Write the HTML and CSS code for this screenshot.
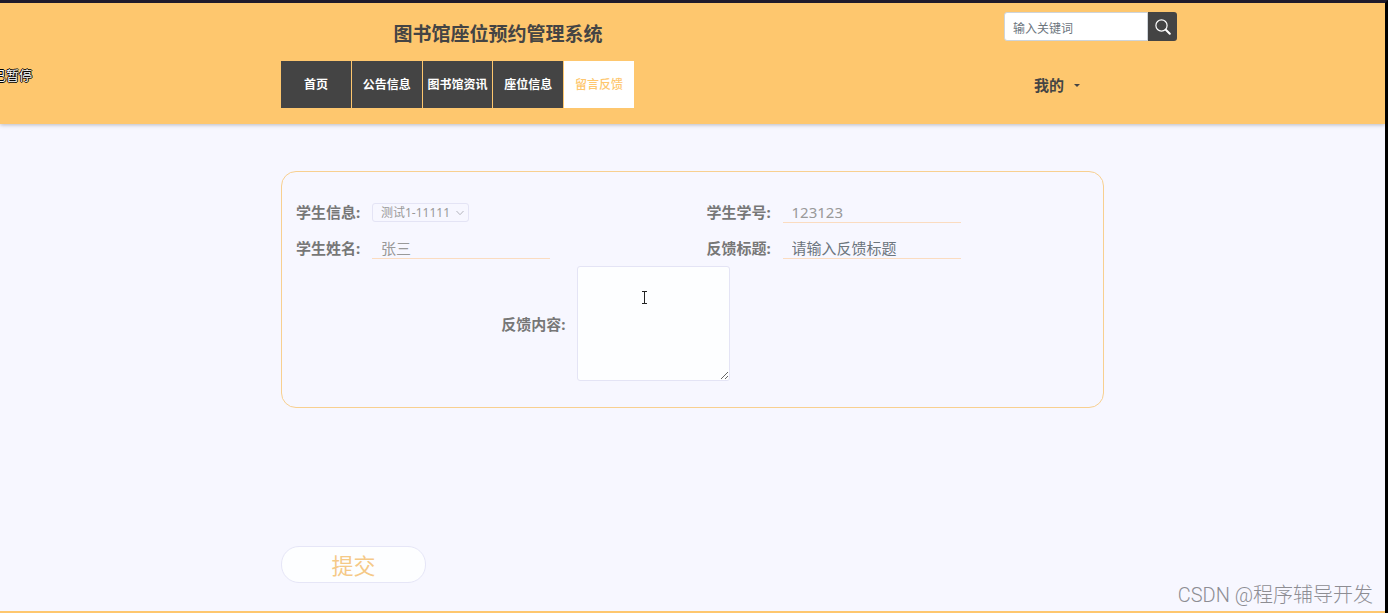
FILE: index.html
```html
<!DOCTYPE html>
<html lang="zh-CN">
<head>
<meta charset="utf-8">
<title>图书馆座位预约管理系统</title>
<link rel="stylesheet" href="styles.css">
</head>
<body>
<div class="page">
  <header class="header">
    <div class="container header-row">
      <div class="brand">
        <h1 class="title">图书馆座位预约管理系统</h1>
        <nav class="nav">
          <a class="nav-link" href="#">首页</a>
          <a class="nav-link" href="#">公告信息</a>
          <a class="nav-link" href="#">图书馆资讯</a>
          <a class="nav-link" href="#">座位信息</a>
          <a class="nav-link active" href="#">留言反馈</a>
        </nav>
      </div>
      <div class="tools">
        <form class="search">
          <input class="search-input" type="text" placeholder="输入关键词" aria-label="输入关键词">
          <button class="search-button" type="button" aria-label="搜索">
            <svg width="16" height="16" viewBox="0 0 16 16" fill="none" stroke="#fff" stroke-linecap="round"><circle cx="6.5" cy="6.5" r="5.6" stroke-width="1.2"/><path d="M10.8 10.8l4 4" stroke-width="2"/></svg>
          </button>
        </form>
        <button class="account" type="button">我的<span class="caret"></span></button>
      </div>
    </div>
  </header>

  <main class="container main">
    <form>
      <div class="card">
        <div class="field">
          <label class="label" for="student">学生信息:</label>
          <span class="select-wrap">
            <select class="select" id="student" disabled><option>测试1-11111</option></select>
            <svg class="chevron" width="8" height="6" viewBox="0 0 8 6" fill="none" stroke="#b4b5bd"><path d="M.5 1L4 4.7 7.500 1"/></svg>
          </span>
        </div>
        <div class="field">
          <label class="label" for="number">学生学号:</label>
          <input class="input" id="number" type="text" value="123123" readonly>
        </div>
        <div class="field">
          <label class="label" for="name">学生姓名:</label>
          <input class="input" id="name" type="text" value="张三" readonly>
        </div>
        <div class="field">
          <label class="label" for="subject">反馈标题:</label>
          <input class="input" id="subject" type="text" placeholder="请输入反馈标题">
        </div>
        <div class="field field-wide">
          <label class="label" for="content">反馈内容:</label>
          <textarea class="textarea" id="content"></textarea>
        </div>
      </div>
      <button class="submit" type="button">提交</button>
    </form>
  </main>
  <footer class="footer"></footer>

  <div class="paused">已暂停</div>
  <svg class="cursor" width="7" height="13" viewBox="0 0 7 13" fill="none" stroke="#222"><path d="M1 .5h5M1 12.500h5M3.500 1v11"/></svg>
  <div class="watermark">CSDN @程序辅导开发</div>
</div>
</body>
</html>
```
FILE: styles.css
```css
* {
  box-sizing: border-box;
}

body {
  margin: 0;
  background: #f7f7ff;
  font-family: "Noto Sans", "Noto Sans CJK SC", sans-serif;
}

button,
input,
select,
textarea {
  font-family: inherit;
}

.page {
  position: relative;
  display: flex;
  flex-direction: column;
  min-height: 100vh;
  overflow: hidden;
  border-top: 3px solid #1e1a2b;
  border-right: 3px solid #000;
}

.container {
  width: 100%;
  max-width: 823px;
  margin: 0 auto;
}

.header {
  padding-bottom: 16px;
  background: #fec76e;
  box-shadow: 0 1px 4px rgba(0, 0, 0, 0.25);
}

.header-row {
  display: flex;
  justify-content: space-between;
}

.brand {
  width: 434px;
}

.title {
  margin: 0;
  padding: 17px 0 13px;
  color: #444;
  font-size: 19px;
  line-height: 28px;
  text-align: center;
}

.nav {
  display: flex;
  gap: 1px;
  width: 353px;
}

.nav-link {
  flex: 1;
  background: #444;
  color: #fff;
  font-size: 12px;
  font-weight: 700;
  line-height: 47px;
  text-align: center;
  text-decoration: none;
  white-space: nowrap;
}

.nav-link.active {
  background: #fff;
  color: #fec76e;
  font-weight: 500;
}

.tools {
  margin-right: -73px;
  padding-top: 9px;
}

.search {
  display: flex;
  width: 173px;
  height: 29px;
}

.search-input {
  flex: 1;
  min-width: 0;
  padding: 3px 8px 0;
  border: 1px solid #ced4da;
  border-radius: 3px 0 0 3px;
  background: #fff;
  font-size: 12px;
}

.search-input::placeholder,
.input::placeholder {
  color: #6c757d;
  opacity: 1;
}

.search-button {
  display: flex;
  align-items: center;
  justify-content: center;
  width: 29px;
  padding: 0;
  border: 0;
  border-radius: 0 3px 3px 0;
  background: #444;
}

.account {
  display: flex;
  align-items: center;
  gap: 10px;
  margin: 32px 0 0 30px;
  padding: 0;
  border: 0;
  background: none;
  color: #444;
  font-size: 15px;
  font-weight: 700;
  line-height: 24px;
}

.caret {
  border-top: 3px solid #444;
  border-right: 3px solid transparent;
  border-left: 3px solid transparent;
}

.main {
  flex: 1;
  padding: 47px 0 28px;
}

.card {
  display: grid;
  grid-template-columns: 1fr 1fr;
  grid-auto-rows: minmax(36px, auto);
  padding: 22px 0 26px;
  border: 1px solid #f8d090;
  border-radius: 15px;
}

.field {
  display: flex;
  align-items: center;
  padding-left: 14px;
}

.field-wide {
  grid-column: 1 / -1;
  margin-left: 25%;
}

.label {
  width: 76px;
  color: #777;
  font-size: 15px;
  font-weight: 700;
  line-height: 24px;
}

.input {
  width: 178px;
  height: 22px;
  padding: 0 9px;
  border: 0;
  border-bottom: 1px solid #fbdcc0;
  background: transparent;
  color: #999;
  font-size: 15px;
}

.select-wrap {
  position: relative;
  display: flex;
}

.select {
  width: 97px;
  height: 19px;
  padding: 0 8px;
  border: 1px solid #e4e4f5;
  border-radius: 3px;
  appearance: none;
  background: transparent;
  color: #999;
  font-size: 12px;
  line-height: 17px;
  opacity: 1;
}

.chevron {
  position: absolute;
  top: 7px;
  right: 5px;
}

.textarea {
  width: 153px;
  height: 115px;
  padding: 8px;
  border: 1px solid #e4e4f5;
  border-radius: 3px;
  background: #fdfeff;
  font-size: 15px;
  resize: both;
}

.submit {
  display: block;
  width: 145px;
  height: 37px;
  margin-top: 138px;
  padding: 2px 0 0;
  border: 1px solid #e6e6f7;
  border-radius: 18px;
  background: #fdfeff;
  color: #f5c987;
  font-size: 22px;
  line-height: 33px;
}

.footer {
  height: 2px;
  background: #fec76e;
}

.paused {
  position: absolute;
  top: 63px;
  left: -7px;
  color: #fff;
  font-size: 13px;
  line-height: 18px;
  text-shadow: 1px 0 #000, -1px 0 #000, 0 1px #000, 0 -1px #000;
}

.cursor {
  position: absolute;
  top: 288px;
  left: 641px;
}

.watermark {
  position: absolute;
  right: 12px;
  bottom: 3px;
  color: #8d8d93;
  font-family: Roboto, "Noto Sans CJK SC", sans-serif;
  font-size: 20px;
  font-weight: 300;
  line-height: 30px;
}
```
